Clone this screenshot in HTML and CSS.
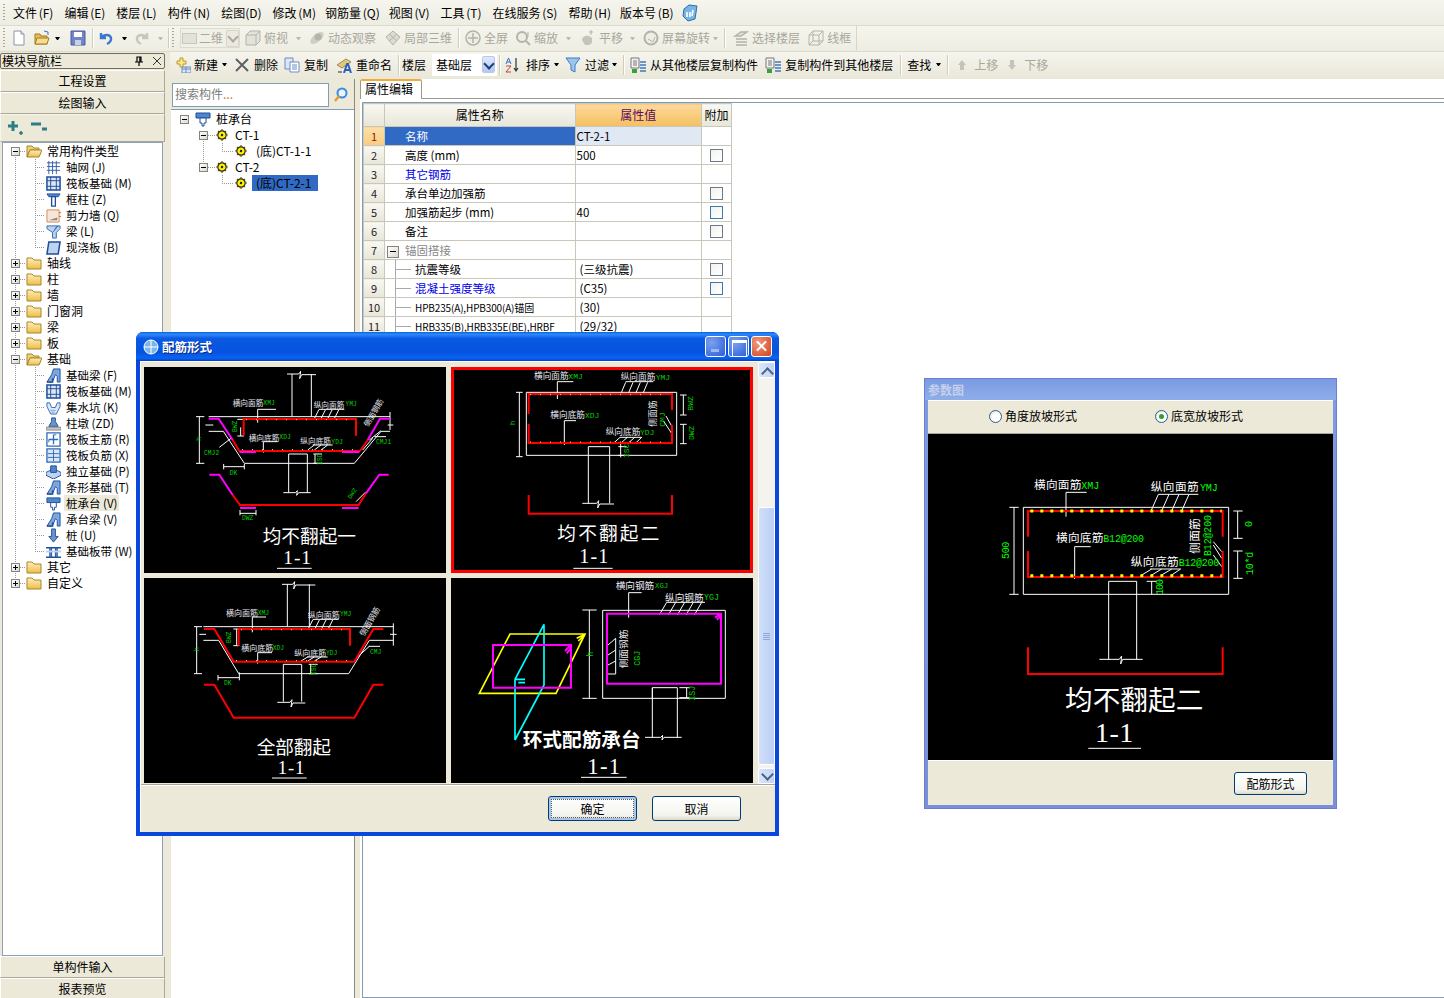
FILE: index.html
```html
<!DOCTYPE html>
<html lang="zh-CN">
<head>
<meta charset="utf-8">
<title>配筋形式</title>
<link rel="stylesheet" href="styles.css">
</head>
<body>
<svg class="sprite" aria-hidden="true">
  <defs>
    <linearGradient id="fold" x1="0" y1="0" x2="0" y2="1"><stop offset="0" stop-color="#fdf0b8"/><stop offset="1" stop-color="#f0bc48"/></linearGradient>
  </defs>
  <symbol id="i-new" viewBox="0 0 16 16"><path d="M3 1h7l3 3v11H3z" fill="#fff" stroke="#8a93a8"/><path d="M10 1v3h3" fill="#dfe6f2" stroke="#8a93a8"/></symbol>
  <symbol id="i-open" viewBox="0 0 16 16"><path d="M1 4h5l1 2h6v8H1z" fill="#e8bb55" stroke="#a37a24"/><path d="M3 8h12l-2 6H1z" fill="#f7dc8e" stroke="#a37a24"/><path d="M10 1l4 1v3" fill="none" stroke="#3f6fc4"/></symbol>
  <symbol id="i-save" viewBox="0 0 16 16"><path d="M1 1h14v14H1z" fill="#7384c8" stroke="#4a5c9e"/><path d="M4 2h8v5H4z" fill="#fff"/><path d="M5 10h6v5H5z" fill="#c8d0e4"/></symbol>
  <symbol id="i-undo" viewBox="0 0 16 16"><path d="M3 3v5h5M3 8c3-4 9-4 10 0 .5 3-2 5-4 6" fill="none" stroke="#3a78d0" stroke-width="2.4"/></symbol>
  <symbol id="i-redo" viewBox="0 0 16 16"><path d="M13 3v5H8M13 8c-3-4-9-4-10 0-.5 3 2 5 4 6" fill="none" stroke="#c6c8c0" stroke-width="2.4"/></symbol>
  <symbol id="i-cube" viewBox="0 0 16 16"><path d="M1 5l4-4h10v10l-4 4H1zM1 5h10v10M11 5l4-4" fill="#e4e3da" stroke="#b4b3a8"/></symbol>
  <symbol id="i-orbit" viewBox="0 0 16 16"><ellipse cx="8" cy="8" rx="8" ry="4" transform="rotate(-40 8 8)" fill="#cfcfc6"/><circle cx="9" cy="7" r="3.5" fill="#b5b5aa"/></symbol>
  <symbol id="i-local" viewBox="0 0 16 16"><path d="M8 1l7 6-7 8-7-8z" fill="#dddcd2" stroke="#b4b3a8"/><path d="M4 4l8 7M12 4l-8 7" stroke="#b4b3a8"/></symbol>
  <symbol id="i-full" viewBox="0 0 16 16"><circle cx="8" cy="8" r="7" fill="#eeeee6" stroke="#b4b3a8" stroke-width="1.5"/><path d="M8 3v10M3 8h10" stroke="#b4b3a8" stroke-width="1.5"/></symbol>
  <symbol id="i-zoom" viewBox="0 0 16 16"><circle cx="7" cy="7" r="5" fill="#eeeee6" stroke="#b4b3a8" stroke-width="2"/><path d="M11 11l4 4" stroke="#b4b3a8" stroke-width="2"/><path d="M13 2v5" stroke="#b4b3a8"/></symbol>
  <symbol id="i-pan" viewBox="0 0 16 16"><path d="M2 10c0-4 5-5 7-4l3 2v5l-3 2H5z" fill="#c4c4ba"/><path d="M11 5V0M9 2h4" stroke="#b4b3a8"/></symbol>
  <symbol id="i-rot" viewBox="0 0 16 16"><circle cx="8" cy="8" r="6.5" fill="#eeeee6" stroke="#b4b3a8" stroke-width="2"/><path d="M5 9l5 3 2-5" fill="none" stroke="#b4b3a8"/></symbol>
  <symbol id="i-floors" viewBox="0 0 16 16"><path d="M2 6l6-4h6L8 6zM3 9h11M3 12h11M3 15h11" fill="#e4e3da" stroke="#b4b3a8" stroke-width="1.4"/></symbol>
  <symbol id="i-wire" viewBox="0 0 16 16"><path d="M1 5l4-4h10v10l-4 4H1zM1 5h10v10M11 5l4-4M5 1v10h10M5 11l-4 4" fill="none" stroke="#b4b3a8"/></symbol>
  <symbol id="i-add" viewBox="0 0 16 16"><path d="M5 1h3v3h3v3H8v3H5V7H2V4h3z" fill="#fbe68c" stroke="#b99a2e"/><path d="M7 10h9v6H7z" fill="#dbe6f6" stroke="#6c8bc0"/><path d="M7 12h9M11 10v6" stroke="#6c8bc0"/></symbol>
  <symbol id="i-del" viewBox="0 0 16 16"><path d="M2 2l12 12M14 2L2 14" stroke="#5e6268" stroke-width="2"/></symbol>
  <symbol id="i-copy" viewBox="0 0 16 16"><path d="M1 1h8v11H1z" fill="#dbe6f6" stroke="#6c8bc0"/><path d="M6 5h9v10H6z" fill="#fff" stroke="#6c8bc0"/><path d="M8 8h5M8 10h5M8 12h5" stroke="#6c8bc0"/></symbol>
  <symbol id="i-ren" viewBox="0 0 16 16"><path d="M1 8l9-6 5 3-9 6z" fill="#e4c87a" stroke="#a08a4a"/><path d="M2 15h4" stroke="#888" stroke-width="2"/><path d="M8 16l3-9h1l3 9M9 13h5" fill="none" stroke="#2f5fc0" stroke-width="2"/></symbol>
  <symbol id="i-sort" viewBox="0 0 16 16"><path d="M1 7l2.500-6L6 7M2 5h3" fill="none" stroke="#3a6fc4"/><path d="M1 9h5l-5 6h5" fill="none" stroke="#c04040"/><path d="M11 1v13M9 11l2 3 2-3" fill="none" stroke="#333" stroke-width="1.2"/></symbol>
  <symbol id="i-filter" viewBox="0 0 16 16"><path d="M1 1h14L10 8v7L6 13V8z" fill="#9cc4ec" stroke="#3f79c2"/></symbol>
  <symbol id="i-floorcopy" viewBox="0 0 16 16"><path d="M1 1h8v10H1z" fill="#f4f4f4" stroke="#777"/><path d="M3 4h4M3 6h4M3 8h4" stroke="#777"/><path d="M10 5h6M10 8h6M10 11h6M10 14h6" stroke="#3f79c2" stroke-width="1.6"/><path d="M2 12h5v4H2z" fill="#3aa03a"/></symbol>
  <symbol id="i-up" viewBox="0 0 16 16"><path d="M8 3l4 5H10v5H6V8H4z" fill="#c4c4ba"/></symbol>
  <symbol id="i-down" viewBox="0 0 16 16"><path d="M8 13l4-5H10V3H6v5H4z" fill="#c4c4ba"/></symbol>
  <symbol id="i-mag" viewBox="0 0 16 16"><circle cx="9" cy="6" r="4.500" fill="#e8f4ff" stroke="#3a8bd8" stroke-width="2"/><path d="M6 9l-4 5" stroke="#e49a2e" stroke-width="2.400"/></symbol>
  <symbol id="i-pin" viewBox="0 0 10 10"><path d="M3 1h4v5H3zM1 6h8M5 6v4" fill="none" stroke="#000" stroke-width="1.200"/><path d="M6 1v5" stroke="#000" stroke-width="1.500"/></symbol>
  <symbol id="i-x" viewBox="0 0 10 10"><path d="M1 1l8 8M9 1L1 9" stroke="#333"/></symbol>
  <symbol id="i-folder" viewBox="0 0 16 16"><path d="M1 3h5l2 2h7v9H1z" fill="url(#fold)" stroke="#a88430"/></symbol>
  <symbol id="i-folder-open" viewBox="0 0 16 16"><path d="M1 3h5l2 2h5v2H4l-3 7z" fill="#f1cf75" stroke="#a88430"/><path d="M4 7h12l-3 7H1z" fill="url(#fold)" stroke="#a88430"/></symbol>
  <symbol id="i-gear" viewBox="0 0 12 12"><circle cx="6" cy="6" r="4.200" fill="#ffee00" stroke="#222" stroke-width="1.200"/><circle cx="6" cy="6" r="1.200" fill="#222"/><path d="M6 0v2M6 10v2M0 6h2M10 6h2M2 2l1 1M9 9l1 1M10 2L9 3M3 9l-1 1" stroke="#5a5a10" stroke-width="1.200"/></symbol>
  <symbol id="t-grid" viewBox="0 0 16 16"><path d="M1 3h14M1 7h14M1 11h14M3 1v14M7 1v14M11 1v14" stroke="#2f5ea8" fill="none"/></symbol>
  <symbol id="t-raft" viewBox="0 0 16 16"><path d="M1 1h14v14H1z" fill="#dbe6f6" stroke="#1f4d9c" stroke-width="1.600"/><path d="M5 1v14M11 1v14M1 5h14M1 11h14" stroke="#1f4d9c"/></symbol>
  <symbol id="t-col" viewBox="0 0 16 16"><path d="M1 2h14l-2 3H3z" fill="#4e86cc" stroke="#1f4d9c"/><path d="M6 5h4v10H6z" fill="#fff" stroke="#1f4d9c" stroke-width="1.400"/></symbol>
  <symbol id="t-wall" viewBox="0 0 16 16"><path d="M1 2h13v13H1z" fill="#f6e6da" stroke="#d68a50"/><path d="M3 13l9-3v3z" fill="#888"/><path d="M14 5h2M14 9h2" stroke="#d06820"/></symbol>
  <symbol id="t-beam" viewBox="0 0 16 16"><path d="M1 2h14v3l-4 4v6H7V9L1 5z" fill="#bcd4f0" stroke="#2f6ab8"/><path d="M9 6l3-4M7 9l6-7" stroke="#2f6ab8"/></symbol>
  <symbol id="t-slab" viewBox="0 0 16 16"><path d="M3 2h12l-2 13H1z" fill="#bcd4f0" stroke="#1f4d9c" stroke-width="1.600"/></symbol>
  <symbol id="t-fbeam" viewBox="0 0 16 16"><path d="M1 15l5-8 2-6h7v14h-3V9l-2-2-3 8z" fill="#7aa8dc" stroke="#1f4d9c"/><path d="M1 15h6v-4" fill="none" stroke="#1f4d9c" stroke-width="1.400"/></symbol>
  <symbol id="t-pit" viewBox="0 0 16 16"><path d="M1 3h3l2 5h4l2-5h3v4l-4 8H5L1 7z" fill="#dbe6f6" stroke="#2f6ab8"/><path d="M5 11h6M6 13h4" stroke="#2f6ab8" stroke-dasharray="1 1"/></symbol>
  <symbol id="t-pier" viewBox="0 0 16 16"><path d="M6 2h4v4l3 5H3l3-5z" fill="#6e93c8" stroke="#1f4d9c"/><path d="M0 12h16v3H0z" fill="#c8c8c0" stroke="#888"/></symbol>
  <symbol id="t-main" viewBox="0 0 16 16"><path d="M1 1h14v14H1z" fill="#fff" stroke="#2f6ab8" stroke-width="1.400"/><path d="M8 3v10M3 8h10" stroke="#2f6ab8" stroke-width="1.400"/><path d="M3 8v3M8 3h3" stroke="#2f6ab8"/></symbol>
  <symbol id="t-neg" viewBox="0 0 16 16"><path d="M1 1h14v14H1z" fill="#dbe6f6" stroke="#2f6ab8" stroke-width="1.400"/><path d="M8 2v12M2 6h12M2 10h12" stroke="#2f6ab8"/></symbol>
  <symbol id="t-iso" viewBox="0 0 16 16"><path d="M0 9l8-4 8 4v3l-8 4-8-4z" fill="#bcd4f0" stroke="#1f4d9c"/><path d="M5 2h6v7H5z" fill="#4e86cc" stroke="#1f4d9c"/></symbol>
  <symbol id="t-cap" viewBox="0 0 16 16"><path d="M1 2h14v5H1z" fill="#4e86cc" stroke="#1f4d9c"/><path d="M5 7h6v5H9v3H7v-3H5z" fill="#fff" stroke="#1f4d9c"/></symbol>
  <symbol id="t-pile" viewBox="0 0 16 16"><path d="M6 1h4v8h3l-5 6-5-6h3z" fill="#6e93c8" stroke="#1f4d9c"/></symbol>
  <symbol id="t-band" viewBox="0 0 16 16"><path d="M0 4h16M0 14h16" stroke="#1f4d9c" stroke-width="1.600"/><path d="M4 4h2v10H4zM10 4h2v10h-2z" fill="#6e93c8" stroke="#1f4d9c"/><path d="M0 8h16" stroke="#bcd4f0" stroke-width="2"/></symbol>
  <symbol id="i-app" viewBox="0 0 16 16"><circle cx="8" cy="8" r="7" fill="#7db5e8" stroke="#fff"/><path d="M8 1v14M1 8h14" stroke="#fff"/></symbol>
  <symbol id="i-mascot" viewBox="0 0 16 18"><path d="M2 5l5-4 8 1-2 13-7 2-5-5z" fill="#77b6e4" stroke="#2d6da8"/><path d="M5 8v5M8 8v5M11 6l-1 6" stroke="#fff" stroke-width="1.600"/></symbol>
</svg>

<div class="app">
  <nav class="menubar">
    <span class="grip"></span>
    <span class="menu-item">文件 (F)</span>
    <span class="menu-item">编辑 (E)</span>
    <span class="menu-item">楼层 (L)</span>
    <span class="menu-item">构件 (N)</span>
    <span class="menu-item">绘图(D)</span>
    <span class="menu-item tight">修改 (M)</span>
    <span class="menu-item tight">钢筋量 (Q)</span>
    <span class="menu-item">视图 (V)</span>
    <span class="menu-item">工具 (T)</span>
    <span class="menu-item">在线服务 (S)</span>
    <span class="menu-item tight">帮助 (H)</span>
    <span class="menu-item">版本号 (B)</span>
    <svg class="mascot"><use href="#i-mascot"/></svg>
  </nav>

  <div class="toolbar main-tools">
    <div class="band">
      <span class="grip tall"></span>
      <svg class="ic ml6"><use href="#i-new"/></svg>
      <svg class="ic ml7"><use href="#i-open"/></svg>
      <span class="arrow ml5"></span>
      <svg class="ic ml10"><use href="#i-save"/></svg>
      <span class="sep ml6"></span>
      <svg class="ic ml5"><use href="#i-undo"/></svg>
      <span class="arrow ml8"></span>
      <svg class="ic ml7"><use href="#i-redo"/></svg>
      <span class="arrow off ml8"></span>
      <span class="sep ml5"></span>
      <span class="grip tall ml3"></span>
      <span class="combo off ml6"><span class="swatch"></span><span>二维</span><span class="combo-btn off"></span></span>
      <span class="tool off ml5"><svg class="ic"><use href="#i-cube"/></svg>俯视</span>
      <span class="arrow off ml8"></span>
      <span class="tool off ml8"><svg class="ic"><use href="#i-orbit"/></svg>动态观察</span>
      <span class="tool off ml9"><svg class="ic"><use href="#i-local"/></svg>局部三维</span>
      <span class="sep ml6"></span>
      <span class="tool off ml6"><svg class="ic"><use href="#i-full"/></svg>全屏</span>
      <span class="tool off ml7"><svg class="ic"><use href="#i-zoom"/></svg>缩放</span>
      <span class="arrow off ml8"></span>
      <span class="tool off ml9"><svg class="ic"><use href="#i-pan"/></svg>平移</span>
      <span class="arrow off ml7"></span>
      <span class="tool off ml8"><svg class="ic"><use href="#i-rot"/></svg>屏幕旋转</span>
      <span class="arrow off ml3"></span>
      <span class="sep ml6"></span>
      <span class="tool off ml8"><svg class="ic"><use href="#i-floors"/></svg>选择楼层</span>
      <span class="tool off ml8"><svg class="ic"><use href="#i-wire"/></svg>线框</span>
      <span class="band-end"></span>
    </div>
  </div>

  <div class="workspace">
    <aside class="nav">
      <header class="nav-title"><span>模块导航栏</span><span class="nav-ctrl"><svg class="mini"><use href="#i-pin"/></svg><svg class="mini"><use href="#i-x"/></svg></span></header>
      <button class="nav-btn first">工程设置</button>
      <button class="nav-btn">绘图输入</button>
      <div class="nav-tools">
        <svg class="op" viewBox="0 0 16 16"><path d="M5 1v10M0 6h10" stroke="#2b7d86" stroke-width="3"/><path d="M13 11v4M11 13h4" stroke="#2b7d86" stroke-width="1.600"/></svg>
        <svg class="op" viewBox="0 0 16 16"><path d="M0 4h10M11 9h5" stroke="#2b7d86" stroke-width="3"/></svg>
      </div>
      <div class="nav-tree">
        <div class="tree-root">
          <div class="t-row"><span class="exp minus"></span><span class="dot-h"></span><svg class="ic"><use href="#i-folder-open"/></svg><span class="lbl">常用构件类型</span></div>
          <div class="t-kids">
            <div class="k-row"><span class="dot-h long"></span><svg class="ic"><use href="#t-grid"/></svg><span class="lbl">轴网 (J)</span></div>
            <div class="k-row"><span class="dot-h long"></span><svg class="ic"><use href="#t-raft"/></svg><span class="lbl">筏板基础 (M)</span></div>
            <div class="k-row"><span class="dot-h long"></span><svg class="ic"><use href="#t-col"/></svg><span class="lbl">框柱 (Z)</span></div>
            <div class="k-row"><span class="dot-h long"></span><svg class="ic"><use href="#t-wall"/></svg><span class="lbl">剪力墙 (Q)</span></div>
            <div class="k-row"><span class="dot-h long"></span><svg class="ic"><use href="#t-beam"/></svg><span class="lbl">梁 (L)</span></div>
            <div class="k-row"><span class="dot-h long"></span><svg class="ic"><use href="#t-slab"/></svg><span class="lbl">现浇板 (B)</span></div>
          </div>
          <div class="t-row"><span class="exp"></span><span class="dot-h"></span><svg class="ic"><use href="#i-folder"/></svg><span class="lbl">轴线</span></div>
          <div class="t-row"><span class="exp"></span><span class="dot-h"></span><svg class="ic"><use href="#i-folder"/></svg><span class="lbl">柱</span></div>
          <div class="t-row"><span class="exp"></span><span class="dot-h"></span><svg class="ic"><use href="#i-folder"/></svg><span class="lbl">墙</span></div>
          <div class="t-row"><span class="exp"></span><span class="dot-h"></span><svg class="ic"><use href="#i-folder"/></svg><span class="lbl">门窗洞</span></div>
          <div class="t-row"><span class="exp"></span><span class="dot-h"></span><svg class="ic"><use href="#i-folder"/></svg><span class="lbl">梁</span></div>
          <div class="t-row"><span class="exp"></span><span class="dot-h"></span><svg class="ic"><use href="#i-folder"/></svg><span class="lbl">板</span></div>
          <div class="t-row"><span class="exp minus"></span><span class="dot-h"></span><svg class="ic"><use href="#i-folder-open"/></svg><span class="lbl">基础</span></div>
          <div class="t-kids">
            <div class="k-row"><span class="dot-h long"></span><svg class="ic"><use href="#t-fbeam"/></svg><span class="lbl">基础梁 (F)</span></div>
            <div class="k-row"><span class="dot-h long"></span><svg class="ic"><use href="#t-raft"/></svg><span class="lbl">筏板基础 (M)</span></div>
            <div class="k-row"><span class="dot-h long"></span><svg class="ic"><use href="#t-pit"/></svg><span class="lbl">集水坑 (K)</span></div>
            <div class="k-row"><span class="dot-h long"></span><svg class="ic"><use href="#t-pier"/></svg><span class="lbl">柱墩 (ZD)</span></div>
            <div class="k-row"><span class="dot-h long"></span><svg class="ic"><use href="#t-main"/></svg><span class="lbl">筏板主筋 (R)</span></div>
            <div class="k-row"><span class="dot-h long"></span><svg class="ic"><use href="#t-neg"/></svg><span class="lbl">筏板负筋 (X)</span></div>
            <div class="k-row"><span class="dot-h long"></span><svg class="ic"><use href="#t-iso"/></svg><span class="lbl">独立基础 (P)</span></div>
            <div class="k-row"><span class="dot-h long"></span><svg class="ic"><use href="#t-fbeam"/></svg><span class="lbl">条形基础 (T)</span></div>
            <div class="k-row"><span class="dot-h long"></span><svg class="ic"><use href="#t-cap"/></svg><span class="lbl hot">桩承台 (V)</span></div>
            <div class="k-row"><span class="dot-h long"></span><svg class="ic"><use href="#t-fbeam"/></svg><span class="lbl">承台梁 (V)</span></div>
            <div class="k-row"><span class="dot-h long"></span><svg class="ic"><use href="#t-pile"/></svg><span class="lbl">桩 (U)</span></div>
            <div class="k-row"><span class="dot-h long"></span><svg class="ic"><use href="#t-band"/></svg><span class="lbl">基础板带 (W)</span></div>
          </div>
          <div class="t-row"><span class="exp"></span><span class="dot-h"></span><svg class="ic"><use href="#i-folder"/></svg><span class="lbl">其它</span></div>
          <div class="t-row last"><span class="exp"></span><span class="dot-h"></span><svg class="ic"><use href="#i-folder"/></svg><span class="lbl">自定义</span></div>
        </div>
      </div>
      <button class="nav-btn">单构件输入</button>
      <button class="nav-btn">报表预览</button>
    </aside>

    <div class="content">
      <div class="toolbar comp-tools">
        <span class="tool g3 ml5"><svg class="ic"><use href="#i-add"/></svg>新建</span>
        <span class="arrow ml4"></span>
        <span class="tool ml7"><svg class="ic"><use href="#i-del"/></svg>删除</span>
        <span class="tool ml6"><svg class="ic"><use href="#i-copy"/></svg>复制</span>
        <span class="tool ml8"><svg class="ic"><use href="#i-ren"/></svg>重命名</span>
        <span class="sep ml6"></span>
        <span class="ml3">楼层</span>
        <span class="combo floor ml6"><span>基础层</span><span class="combo-btn"></span></span>
        <span class="sep ml2"></span>
        <span class="tool g5 ml5"><svg class="ic"><use href="#i-sort"/></svg>排序</span>
        <span class="arrow ml4"></span>
        <span class="tool ml6"><svg class="ic"><use href="#i-filter"/></svg>过滤</span>
        <span class="arrow ml3"></span>
        <span class="sep ml6"></span>
        <span class="tool ml6"><svg class="ic"><use href="#i-floorcopy"/></svg>从其他楼层复制构件</span>
        <span class="tool ml7"><svg class="ic"><use href="#i-floorcopy"/></svg>复制构件到其他楼层</span>
        <span class="sep ml7"></span>
        <span class="ml6">查找</span>
        <span class="arrow ml5"></span>
        <span class="sep ml6"></span>
        <span class="tool off ml6"><svg class="ic"><use href="#i-up"/></svg>上移</span>
        <span class="tool off ml6"><svg class="ic"><use href="#i-down"/></svg>下移</span>
      </div>

      <div class="split">
        <section class="comp-pane">
          <div class="search"><span class="search-box">搜索构件<i>...</i></span><svg class="search-ic"><use href="#i-mag"/></svg></div>
          <div class="comp-tree">
            <div class="c-row r0"><span class="exp minus"></span><svg class="ic"><use href="#t-cap"/></svg><span class="lbl">桩承台</span></div>
            <div class="c-group">
              <div class="c-row r1"><span class="exp minus"></span><span class="dot-h"></span><svg class="gear"><use href="#i-gear"/></svg><span class="lbl w">CT-1</span></div>
              <div class="c-row r2"><span class="dot-h long"></span><svg class="gear"><use href="#i-gear"/></svg><span class="lbl sel-pad">(底)CT-1-1</span></div>
              <div class="c-row r1"><span class="exp minus"></span><span class="dot-h"></span><svg class="gear"><use href="#i-gear"/></svg><span class="lbl w">CT-2</span></div>
              <div class="c-row r2"><span class="dot-h long"></span><svg class="gear"><use href="#i-gear"/></svg><span class="lbl sel-pad selected">(底)CT-2-1</span></div>
            </div>
          </div>
        </section>
        <div class="splitter"></div>
        <section class="props">
          <div class="tabs"><span class="tab">属性编辑</span></div>
          <div class="grid-frame">
            <table class="grid">
              <colgroup><col class="c0"><col class="c1"><col class="c2"><col class="c3"></colgroup>
              <thead><tr><th></th><th>属性名称</th><th class="active">属性值</th><th>附加</th></tr></thead>
              <tbody>
                <tr><th class="active-row">1</th><td class="name on">名称</td><td class="cur">CT-2-1</td><td></td></tr>
                <tr><th>2</th><td class="name">高度 (mm)</td><td>500</td><td class="ck"><span class="box"></span></td></tr>
                <tr><th>3</th><td class="name link">其它钢筋</td><td></td><td></td></tr>
                <tr><th>4</th><td class="name">承台单边加强筋</td><td></td><td class="ck"><span class="box"></span></td></tr>
                <tr><th>5</th><td class="name">加强筋起步 (mm)</td><td>40</td><td class="ck"><span class="box blue"></span></td></tr>
                <tr><th>6</th><td class="name">备注</td><td></td><td class="ck"><span class="box"></span></td></tr>
                <tr><th>7</th><td class="group"><span class="exp minus"></span>锚固搭接</td><td></td><td></td></tr>
                <tr><th>8</th><td class="sub">抗震等级</td><td class="val">(三级抗震)</td><td class="ck"><span class="box"></span></td></tr>
                <tr><th>9</th><td class="sub link">混凝土强度等级</td><td class="val">(C35)</td><td class="ck"><span class="box blue"></span></td></tr>
                <tr><th>10</th><td class="sub tiny">HPB235(A),HPB300(A)锚固</td><td class="val">(30)</td><td></td></tr>
                <tr><th>11</th><td class="sub tiny">HRB335(B),HRB335E(BE),HRBF</td><td class="val">(29/32)</td><td></td></tr>
              </tbody>
            </table>
          </div>
        </section>
      </div>
    </div>
  </div>
</div>

<div class="window bar-dialog">
  <div class="titlebar">
    <svg class="app-ic"><use href="#i-app"/></svg><span class="win-title">配筋形式</span>
    <span class="win-ctrls"><span class="w-btn min"></span><span class="w-btn max"></span><span class="w-btn cls"></span></span>
  </div>
  <div class="win-body">
    <div class="picker">
      <div class="panels">
        <div class="panel tall-row d1">
          <svg class="fill" viewBox="24 111 906 618">
            <path class="w" d="M468 132V260M526 132V260M453 132H488l6-8-3 22 6-12H540M218 260H762M190 260V400M180 260H205M180 400H205M218 304H262L325 400H655L735 304H762M762 246V300M755 285H772M208 285H232M458 372V488M514 372V488M458 372H514M442 488H478l6-6-2 14 6-8H524M263 410H325M263 402V418M325 402V418M365 278V238H420M533 270L548 240M553 270L568 240M573 270L588 240M593 270L608 240M548 238H625M382 368V335H425M515 360L535 345M535 360L555 345M555 360L575 345M530 345H590M532 372H558M532 400H558M537 372V400M250 352L285 325M312 550H360M312 540V556M360 540V556M660 515L690 485M314 292V318M304 268H324M304 318H324M700 330L735 302M715 320H750M680 360L710 325"/>
            <path class="r" d="M323 317V267H660V317M310 363H672M290 330L310 363M672 363L695 330M290 495L312 525H668L690 490"/>
            <path class="m" d="M218 266H248L290 330M695 330L732 266H762M310 366H360M618 366H670M220 434H250L290 495M690 490L730 434H758M312 534H360M618 534H668"/>
            <path class="y" d="M330 269H660M318 359H670"/>
            <text class="lb" x="290" y="228">横向面筋</text><text class="gr" x="382" y="226">XMJ</text>
            <text class="lb" x="533" y="234">纵向面筋</text><text class="gr" x="628" y="229">YMJ</text>
            <text class="lb" x="338" y="332">横向底筋</text><text class="gr" x="430" y="328">XDJ</text>
            <text class="lb" x="493" y="342">纵向底筋</text><text class="gr" x="586" y="342">YDJ</text>
            <text class="gr" x="204" y="375">CMJ2</text><text class="gr" x="720" y="342">CMJ1</text><text class="gr" x="281" y="435">DK</text><text class="gr" x="318" y="569">DWZ</text>
            <text class="gr" transform="rotate(-90 302 306)" x="302" y="306">BWZ</text><text class="gr" transform="rotate(-90 557 405)" x="557" y="405">ISC</text><text class="gr" transform="rotate(-90 196 332)" x="196" y="332">h</text>
            <text class="gr" transform="rotate(-55 644 508)" x="644" y="508">DWZ</text><text class="lb" transform="rotate(-60 697 292)" x="697" y="292">侧面钢筋</text>
            <text class="ttl" x="380" y="640" textLength="280">均不翻起一</text>
            <text class="num" x="442" y="702" textLength="83">1-1</text><path class="w" d="M423 715H527"/>
          </svg>
        </div>
        <div class="panel tall-row selected-panel d2">
          <svg class="fill" viewBox="3 111 906 618">
            <path class="w" d="M229 187H680V376H229ZM208 187V380M198 187H218M198 380H218M700 195V255M690 195H710M690 255H710M700 283V341M690 283H710M690 341H710M415 376V350H479V520M415 376V520M397 520H440l6-8-3 22 6-12H492M322 207V155H370M511 195L527 157M533 195L549 157M555 195L571 157M577 195L593 157M527 155H610M343 345V272H378M490 340L510 322M512 340L532 322M534 340L554 322M556 340L575 322M510 322H575M648 258L666 290M640 272L666 312M512 342V382M505 350H530M505 376H530"/>
            <path class="r" d="M236 252V192H666V240M236 282V339H666V285M236 495V551H666V495"/>
            <path class="y" d="M240 194H660M240 336H660"/>
            <text class="lb" x="252" y="147">横向面筋</text><text class="gr" x="355" y="147">XMJ</text>
            <text class="lb" x="512" y="150">纵向面筋</text><text class="gr" x="617" y="150">YMJ</text>
            <text class="lb" x="301" y="263">横向底筋</text><text class="gr" x="405" y="263">XDJ</text>
            <text class="lb" x="467" y="315">纵向底筋</text><text class="gr" x="570" y="315">YDJ</text>
            <text class="lb" transform="rotate(-90 618 290)" x="618" y="290">侧面筋</text>
            <text class="gr" transform="rotate(-90 644 290)" x="644" y="290">CMJ</text><text class="gr" transform="rotate(-90 730 242)" x="730" y="242">BWZ</text><text class="gr" transform="rotate(-90 732 330)" x="732" y="330">DWZ</text><text class="gr" transform="rotate(-90 538 384)" x="538" y="384">ISC</text><text class="gr" transform="rotate(-90 194 286)" x="194" y="286">h</text>
            <text class="ttl" x="322" y="630" textLength="306">均不翻起二</text>
            <text class="num" x="388" y="700" textLength="87">1-1</text><path class="w" d="M370 715H488"/>
          </svg>
        </div>
        <div class="panel d3">
          <svg class="fill" viewBox="24 9 906 615">
            <path class="w" d="M454 28V155M520 28V155M438 28H470l6-8-3 22 6-12H538M202 155H772M182 155V296M174 155H198M174 296H198M202 196H248L308 296H638L700 196H772M772 145V212M762 178H782M190 178H210M442 380V268H497V380M424 382H462l6-8-3 22 6-12H508M246 308H310M246 300V316M310 292V316M349 172V126H390M515 165L530 135M535 165L550 135M555 165L570 135M575 165L590 135M530 133H608M365 266V233H408M495 258L515 246M515 258L535 246M535 258L555 246M513 246H575M518 268H545M518 296H545M524 268V296M302 162V212M292 162H310M292 212H310M660 250L700 214M698 214H732"/>
            <path class="r" d="M204 162H235L293 260H655L712 162H742M308 212V162H642V212M204 329H235L293 428H655L712 329H742"/>
            <path class="y" d="M315 164H640M300 257H650"/>
            <text class="lb" x="270" y="122">横向面筋</text><text class="gr" x="365" y="120">XMJ</text>
            <text class="lb" x="515" y="128">纵向面筋</text><text class="gr" x="612" y="123">YMJ</text>
            <text class="lb" x="316" y="227">横向底筋</text><text class="gr" x="410" y="225">XDJ</text>
            <text class="lb" x="475" y="242">纵向底筋</text><text class="gr" x="570" y="240">YDJ</text>
            <text class="gr" x="702" y="236">CMJ</text><text class="gr" x="264" y="329">DK</text>
            <text class="gr" transform="rotate(-90 286 204)" x="286" y="204">BWZ</text><text class="gr" transform="rotate(-90 540 300)" x="540" y="300">ISC</text><text class="gr" transform="rotate(-90 188 228)" x="188" y="228">h</text>
            <text class="lb" transform="rotate(-60 685 185)" x="685" y="185">侧面钢筋</text>
            <text class="ttl" x="362" y="537" textLength="223">全部翻起</text>
            <text class="num" x="425" y="596" textLength="80">1-1</text><path class="w" d="M408 609H512"/>
          </svg>
        </div>
        <div class="panel d4">
          <svg class="fill" viewBox="3 9 906 615">
            <path class="w" d="M458 106H826V370H458ZM418 105V370M397 105H440M397 370H440M607 370V338H682V487M607 338V487M585 487H632l6-6-2 14 6-8H695M536 128V53H575M628 120L650 82M655 120L677 82M682 120L704 82M708 120L730 82M733 120L755 82M650 82H765M474 210L497 190V297L474 297M474 240L497 225M474 270L497 258M688 338H718M688 368H718M710 338V368"/>
            <path class="yb" d="M88 355L180 177H405L318 355ZM380 190L405 178M385 198L405 178M390 206L405 178"/>
            <path class="cy" d="M195 495L282 330M195 313L282 148M195 313V495M282 148V332M195 313H225M205 323H225"/>
            <path class="mg" d="M129 210H363V338H129ZM345 228L360 212M350 235L362 220M471 116H813V326H471ZM795 128L810 118M800 134L812 124"/>
            <text class="lb" x="497" y="42">横向钢筋</text><text class="gr high" x="615" y="38">XGJ</text>
            <text class="lb" x="645" y="78">纵向钢筋</text><text class="gr" x="762" y="76">YGJ</text>
            <text class="lb" transform="rotate(-90 532 280)" x="532" y="280">侧面钢筋</text>
            <text class="gr" transform="rotate(-90 570 272)" x="570" y="272">CGJ</text><text class="gr" transform="rotate(-90 735 377)" x="735" y="377">ISJ</text><text class="gr" transform="rotate(-90 428 245)" x="428" y="245">h</text>
            <text class="ttl bold" x="218" y="515" textLength="354">环式配筋承台</text>
            <text class="num" x="412" y="598" textLength="98">1-1</text><path class="w" d="M393 607H530"/>
          </svg>
        </div>
      </div>
      <div class="vscroll">
        <span class="sb-btn up"></span>
        <div class="sb-track"><span class="sb-thumb"></span></div>
        <span class="sb-btn down"></span>
      </div>
    </div>
    <div class="win-foot">
      <button class="xp-btn ok">确定</button>
      <button class="xp-btn">取消</button>
    </div>
  </div>
</div>

<div class="window param">
  <div class="param-title">参数图</div>
  <div class="param-body">
    <div class="radios">
      <label class="radio"><span class="rd"></span>角度放坡形式</label>
      <label class="radio"><span class="rd on"></span>底宽放坡形式</label>
    </div>
    <svg class="param-fig" viewBox="24 177 1215 978">
      <path class="w" d="M310 397H926V658H310ZM282 397V658M268 397H296M268 658H296M566 658V619H650V853M566 658V853M538 853H598l7-10-3 24 6-14H668M438 425V352H500M464 612V515H512M693 408L715 358M725 408L747 358M755 408L777 358M785 408L807 358M715 358H835M662 602L695 582M692 602L725 582M722 602L755 582M752 602L782 582M690 582H782M953 408V490M940 408H968M940 490H968M953 528V610M940 528H968M940 610H968M680 619H710M695 619V658M880 500L905 530M880 510L905 550M880 540L905 575"/>
      <path class="r" d="M324 485V408H908V485M324 528V606H908V528M324 817V897H908V817"/>
      <path class="y2" d="M331 408H905M331 602H905"/>
      <path class="mdots" d="M905 530v.1M905 550v.1M905 575v.1"/>
      <text class="lb2" x="342" y="342" textLength="142">横向面筋</text><text class="gr2" x="484" y="342" textLength="54">XMJ</text>
      <text class="lb2" x="692" y="348" textLength="144">纵向面筋</text><text class="gr2" x="840" y="348" textLength="53">YMJ</text>
      <text class="lb2" x="408" y="500" textLength="142">横向底筋</text><text class="gr2" x="550" y="500" textLength="122">B12@200</text>
      <text class="lb2" x="632" y="572" textLength="144">纵向底筋</text><text class="gr2" x="776" y="572" textLength="122">B12@200</text>
      <text class="lb2" transform="rotate(-90 838 536)" x="838" y="536" textLength="106">侧面筋</text>
      <text class="gr2" transform="rotate(-90 873 543)" x="873" y="543" textLength="123">B12@200</text>
      <text class="gr2" transform="rotate(-90 266 552)" x="266" y="552" textLength="52">500</text>
      <text class="gr2" transform="rotate(-90 995 456)" x="995" y="456">0</text>
      <text class="gr2" transform="rotate(-90 998 600)" x="998" y="600" textLength="70">10*d</text>
      <text class="gr2" transform="rotate(-90 730 660)" x="730" y="660" textLength="48">100</text>
      <text class="ttl2" x="435" y="1005" textLength="415">均不翻起二</text>
      <text class="num2" x="525" y="1100" textLength="115">1-1</text><path class="w" d="M505 1120H663"/>
    </svg>
    <div class="param-foot"><button class="xp-btn small">配筋形式</button></div>
  </div>
</div>
</body>
</html>
```

FILE: styles.css
```css
* { box-sizing: border-box; }
html, body { margin: 0; height: 100%; }
body {
  position: relative;
  width: 1444px;
  height: 998px;
  overflow: hidden;
  background: #fff;
  color: #000;
  font: 12px/16px "Noto Sans CJK SC", "Liberation Sans", sans-serif;
}
.sprite { position: absolute; width: 0; height: 0; }
button { font: inherit; color: inherit; padding: 0; cursor: default; }
.ic { width: 16px; height: 16px; flex: none; display: block; }

.ml2 { margin-left: 2px; } .ml3 { margin-left: 3px; } .ml4 { margin-left: 4px; }
.ml5 { margin-left: 5px; } .ml6 { margin-left: 6px; } .ml7 { margin-left: 7px; }
.ml8 { margin-left: 8px; } .ml9 { margin-left: 9px; } .ml10 { margin-left: 10px; }

.app { display: flex; flex-direction: column; height: 998px; }

.menubar {
  height: 26px;
  display: flex;
  align-items: center;
  padding-left: 3px;
  background: linear-gradient(#f6f5ee, #eeede2);
  border-bottom: 1px solid #dcdacb;
}
.grip { width: 2px; height: 18px; flex: none; background: repeating-linear-gradient(#a9a794 0 1px, transparent 1px 3px); }
.grip.tall { height: 20px; }
.menu-item { margin-left: 8px; margin-right: 3px; white-space: nowrap; word-spacing: -1px; }
.menu-item.tight { margin-right: 1px; }
.mascot { width: 16px; height: 18px; margin-left: 5px; }

.toolbar { display: flex; align-items: center; white-space: nowrap; }
.main-tools {
  height: 26px;
  padding-bottom: 1px;
  background: linear-gradient(#f6f5ee, #eeede2);
  border-bottom: 1px solid #dcdacb;
}
.band { display: flex; align-items: center; height: 100%; padding-left: 3px; }
.band-end { width: 1px; height: 100%; background: #d8d6c6; margin-left: 5px; }
.sep { width: 1px; height: 20px; flex: none; background: #cfcdbc; box-shadow: 1px 0 0 #fff; }
.arrow { height: 0; flex: none; border-style: solid; border-color: #000 transparent transparent; border-width: 3px 2.5px 0; width: 5px; }
.arrow.off { border-top-color: #bcbbb0; }
.tool { display: flex; align-items: center; gap: 3px; flex: none; }
.tool.off { color: #a8a79b; }
.comp-tools .tool { gap: 4px; }
.comp-tools .tool.g3 { gap: 3px; }
.comp-tools .tool.g5 { gap: 5px; }
.combo { display: flex; align-items: center; flex: none; }
.combo.off { width: 60px; height: 20px; color: #a8a79b; background: #f1f0e6; border: 1px solid #dcdbd0; gap: 2px; padding-left: 1px; }
.swatch { width: 15px; height: 11px; background: #e3e2d8; border: 1px solid #c8c7bb; }
.combo-btn {
  margin-left: auto; width: 13px; height: 17px; flex: none;
  background: linear-gradient(#dfe9fb, #b4c9f0); border: 1px solid #b5c8ee; border-radius: 2px;
  display: flex; align-items: center; justify-content: center;
}
.combo-btn::after { content: ""; width: 6px; height: 6px; border: solid #1e3f7e; border-width: 0 2px 2px 0; transform: translateY(-1px) rotate(45deg); }
.combo-btn.off { background: #eceae0; border-color: #d6d5c9; }
.combo-btn.off::after { border-color: #aaa99d; }
.combo.floor { width: 65px; height: 22px; background: #fff; padding: 0 2px 0 4px; }

.workspace { flex: 1; display: flex; min-height: 0; background: #ece9d8; }

.nav { width: 170px; height: 948px; flex: none; align-self: flex-start; padding-right: 5px; display: flex; flex-direction: column; }
.nav-title {
  height: 16px; margin-top: 1px; flex: none;
  display: flex; justify-content: space-between; align-items: center;
  border: 1px solid #716f64; border-radius: 2px;
  padding-left: 1px; line-height: 14px; font-size: 12px; background: #ece9d8;
}
.nav-ctrl { display: flex; align-items: center; gap: 8px; padding-right: 2px; }
.mini { width: 10px; height: 10px; display: block; }
.nav-btn {
  height: 22px; display: block; width: 100%; flex: none;
  background: #ece9d8; border: 0; border-top: 1px solid #fff; border-bottom: 1px solid #aca899;
  border-left: 1px solid #fff; border-right: 1px solid #aca899;
}
.nav-btn.first { margin-top: 1px; }
.nav-tools {
  height: 28px; flex: none; display: flex; align-items: center; gap: 7px; padding-left: 7px;
  border: 1px solid #f6f5ee; border-bottom-color: #aca899; border-right-color: #aca899;
}
.op { width: 16px; height: 16px; }
.nav-tree {
  flex: 1; min-height: 0; margin: 0 2px; background: #fff; border: 1px solid #8aa0be; overflow: hidden;
}
.tree-root {
  background: repeating-linear-gradient(#999 0 1px, transparent 1px 2px) 12px 8px / 1px calc(100% - 16px) no-repeat;
}
.t-row { height: 16px; display: flex; align-items: center; padding-left: 8px; }
.exp {
  width: 9px; height: 9px; flex: none; position: relative; z-index: 1;
  border: 1px solid #848484; background: linear-gradient(135deg, #fff, #dcd9cc);
  display: inline-block;
}
.exp::before { content: ""; position: absolute; left: 1px; top: 3px; width: 5px; height: 1px; background: #000; }
.exp::after { content: ""; position: absolute; left: 3px; top: 1px; width: 1px; height: 5px; background: #000; }
.exp.minus::after { display: none; }
.dot-h {
  width: 6px; height: 1px; flex: none;
  background: repeating-linear-gradient(90deg, #999 0 1px, transparent 1px 2px);
}
.dot-h.long { width: 10px; margin-right: 1px; }
.lbl { margin-left: 5px; white-space: nowrap; }
.t-kids {
  margin-left: 32px;
  background: repeating-linear-gradient(#999 0 1px, transparent 1px 2px) 0 0 / 1px calc(100% - 8px) no-repeat;
}
.k-row { height: 16px; display: flex; align-items: center; font-size: 11.5px; }
.k-row .ic { width: 15px; height: 15px; }
.k-row .lbl { margin-left: 5px; }
.k-row .hot { background: #ece9d8; margin-left: 3px; padding: 0 2px; height: 16px; }

.content { flex: 1; min-width: 0; display: flex; flex-direction: column; }
.comp-tools { height: 27px; flex: none; padding-bottom: 2px; background: linear-gradient(#f6f5ee, #e9e7d8); }
.split { flex: 1; min-height: 0; display: flex; }
.comp-pane { width: 184px; flex: none; margin-left: 1px; display: flex; flex-direction: column; border-right: 1px solid #8a8a80; }
.search { height: 30px; flex: none; display: flex; align-items: center; padding: 1px 0 0 1px; gap: 4px; }
.search-box {
  width: 157px; height: 24px; background: #fff; border: 1px solid #7f9db9; color: #7d7d7d; padding-left: 2px; line-height: 20px; font-size: 12px;
}
.search-box i { font-style: normal; color: #d07a30; }
.search-ic { width: 16px; height: 16px; }
.comp-tree { flex: 1; background: #fff; border-top: 1px solid #7f9db9; }
.c-row { height: 16px; display: flex; align-items: center; white-space: nowrap; }
.r0 { padding-left: 9px; margin-top: 1px; }
.r0 .ic { margin-left: 6px; }
.c-group { background: repeating-linear-gradient(#999 0 1px, transparent 1px 2px) 32px 8px / 1px 32px no-repeat; }
.r1 { padding-left: 28px; }
.r1 .dot-h { width: 8px; }
.r1 .lbl { margin-left: 7px; }
.r2 { padding-left: 51px; background: repeating-linear-gradient(#999 0 1px, transparent 1px 2px) 51px 0 / 1px 8px no-repeat; }
.r2 .dot-h.long { width: 12px; }
.gear { width: 12px; height: 12px; flex: none; }
.r2 .lbl { margin-left: 5px; padding: 0 7px 0 4px; height: 16px; }
.selected { background: #316ac5; color: #000; }

.splitter { width: 7px; flex: none; }
.props { flex: 1; min-width: 0; background: #fff; display: flex; flex-direction: column; margin-left: -2px; }
.tabs { height: 20px; flex: none; display: flex; border-bottom: 1px solid #9c9a8c; background: #fff; }
.tab {
  width: 62px; height: 20px; padding-left: 4px; line-height: 15px; background: #fff;
  border: 1px solid #9c9a8c; border-bottom: 0; border-top: 2px solid #f4a93a; border-radius: 2px 2px 0 0; margin-bottom: -1px;
}
.grid-frame { flex: 1; margin: 3px 0 0 2px; border: 1px solid #7f9db9; border-right: 0; }
.grid { border-collapse: collapse; table-layout: fixed; width: 369px; }
.c0 { width: 21px; } .c1 { width: 190px; } .c2 { width: 126px; } .c3 { width: 30px; }
.grid th { font-weight: 400; background: linear-gradient(#f9f8f1, #e8e6d8); border: 1px solid #c9c7ba; height: 19px; padding: 0; }
.grid thead th { height: 23px; }
.grid thead th.active { background: linear-gradient(#fcd99c, #f4c060); color: #5c0a5c; }
.grid tbody th { font-size: 11px; color: #222; }
.grid tbody th.active-row { background: linear-gradient(#fde0a8, #f9cc80); color: #8a1616; }
.grid td { height: 19px; padding: 0 0 0 1px; border: 1px solid #c9c7ba; overflow: hidden; white-space: nowrap; font-size: 11.5px; line-height: 15px; }
.grid td.name { padding-left: 20px; }
.grid td.on { background: #316ac5; color: #fff; }
.grid td.cur { background: #e0e8f4; }
.grid td.link { color: #0000e6; }
.grid td.group { color: #888; padding-left: 2px; }
.group .exp { margin-right: 6px; width: 12px; height: 12px; vertical-align: -3px; }
.group .exp::before { left: 2px; top: 4px; width: 6px; }
.grid td.sub {
  padding-left: 30px;
  background: linear-gradient(#aaa, #aaa) 10px 0 / 1px 100% no-repeat, linear-gradient(#aaa, #aaa) 10px 50% / 16px 1px no-repeat;
}
.grid td.val { padding-left: 4px; }
.grid td.tiny { font-size: 10px; letter-spacing: -.15px; }
.ck { text-align: center; padding: 0 !important; }
.box { display: inline-block; width: 13px; height: 13px; border: 1px solid #6b7a88; background: linear-gradient(135deg, #f2f2ec, #fff); vertical-align: -2px; }
.box.blue { border-color: #3d78b0; }

.window { position: absolute; }
.bar-dialog {
  left: 136px; top: 332px; width: 643px; height: 504px;
  background: #0a47dc; border-radius: 7px 7px 0 0;
  display: flex; flex-direction: column; padding: 0 4px 4px;
}
.titlebar {
  height: 29px; flex: none; margin: 0 -4px; padding: 0 7px; display: flex; align-items: center;
  background: linear-gradient(#0a5fe8 0, #2e8af8 8%, #0a5ae4 22%, #0553e0 70%, #0a64f0 90%, #0340c8 100%);
  border-radius: 7px 7px 0 0;
}
.app-ic { width: 16px; height: 16px; flex: none; }
.win-title { color: #fff; font-weight: 700; margin-left: 3px; font-size: 12.5px; text-shadow: 1px 1px 0 #0a2a80; }
.win-ctrls { margin-left: auto; display: flex; gap: 2px; }
.w-btn { width: 21px; height: 21px; border: 1px solid #fff; border-radius: 3px; background: radial-gradient(circle at 30% 30%, #7aa2f0, #2a5cd8); position: relative; }
.w-btn.min::after { content: ""; position: absolute; left: 5px; bottom: 4px; width: 8px; height: 3px; background: #9bb8f0; }
.w-btn.max::after { content: ""; position: absolute; left: 3px; top: 3px; width: 13px; height: 13px; border: 1px solid #fff; border-top-width: 3px; }
.w-btn.cls { background: radial-gradient(circle at 30% 30%, #ee9a80, #d4421a); }
.w-btn.cls::before, .w-btn.cls::after { content: ""; position: absolute; left: 3px; top: 8px; width: 13px; height: 2px; background: #fff; }
.w-btn.cls::before { transform: rotate(45deg); }
.w-btn.cls::after { transform: rotate(-45deg); }
.win-body { flex: 1; min-height: 0; background: #ece9d8; border-top: 1px solid #fff; border-left: 1px solid #fff; display: flex; flex-direction: column; }
.picker { height: 423px; flex: none; display: flex; border-bottom: 1px solid #aca899; }
.panels { display: grid; grid-template-columns: 302px 302px; grid-template-rows: 206px 205px; gap: 5px; padding: 5px 0 0 3px; }
.panel { background: #000; position: relative; overflow: hidden; }
.selected-panel { outline: 3px solid #ff0000; outline-offset: -3px; }
.fill { display: block; width: 100%; height: 100%; }
.vscroll { width: 17px; margin-left: 5px; display: flex; flex-direction: column; background: #f4f3ee; }
.sb-btn { height: 16px; flex: none; background: linear-gradient(90deg, #d9e6fb, #c1d3f3); border: 1px solid #fff; border-radius: 2px; position: relative; }
.sb-btn::after { content: ""; position: absolute; left: 4px; width: 7px; height: 7px; border: solid #4d6185; border-width: 2px 0 0 2px; top: 6px; transform: rotate(45deg); }
.sb-btn.down::after { transform: rotate(225deg); top: 1px; }
.sb-track { flex: 1; display: flex; align-items: flex-end; padding-bottom: 3px; }
.sb-thumb { width: 100%; height: 258px; background: linear-gradient(90deg, #d0dff9, #bcd0f5); border: 1px solid #fff; border-radius: 2px; position: relative; }
.sb-thumb::after { content: ""; position: absolute; left: 4px; top: 125px; width: 7px; height: 7px; background: repeating-linear-gradient(#8fa8d8 0 1px, transparent 1px 2px); }
.win-foot { flex: 1; border-top: 1px solid #fff; display: flex; gap: 15px; justify-content: flex-end; align-items: flex-start; padding: 10px 34px 0 0; }
.xp-btn {
  width: 89px; height: 25px; border: 1px solid #003c74; border-radius: 3px;
  background: linear-gradient(#fff, #f4f4ee 80%, #dcd8c8);
  display: block; text-align: center; line-height: 21px;
}
.xp-btn.ok { box-shadow: inset 0 0 0 2px #a8c4ec; outline: 1px dotted #555; outline-offset: -4px; }
.xp-btn.small { width: 73px; height: 23px; line-height: 19px; }

.param {
  left: 924px; top: 378px; width: 413px; height: 431px;
  background: linear-gradient(#7f9be2, #7a8fd8); border: 1px solid #6b7fd2; padding: 0 3px 3px;
  display: flex; flex-direction: column;
}
.param-title { height: 21px; flex: none; color: #c6d0ea; font-weight: 700; line-height: 22px; background: linear-gradient(#7c9ae2, #8daeea); margin: 0 -3px; padding-left: 3px; }
.param-body { flex: 1; min-height: 0; background: #ece9d8; display: flex; flex-direction: column; border-top: 1px solid #fff; }
.radios { height: 33px; flex: none; display: flex; align-items: center; padding: 0 0 2px 61px; gap: 78px; border-bottom: 1px solid #aca899; }
.radio { display: flex; align-items: center; gap: 3px; width: 88px; white-space: nowrap; }
.rd { width: 13px; height: 13px; border-radius: 50%; border: 1px solid #2f5f8c; background: radial-gradient(circle at 60% 60%, #fff 40%, #d8d6c8); flex: none; position: relative; }
.rd.on::after { content: ""; position: absolute; left: 3px; top: 3px; width: 5px; height: 5px; border-radius: 50%; background: #2ea12e; }
.param-fig { display: block; width: 405px; height: 326px; background: #000; flex: none; }
.param-foot { flex: 1; border-top: 1px solid #fff; display: flex; justify-content: flex-end; align-items: flex-start; padding: 11px 26px 0 0; }

svg .w { fill: none; stroke: #fff; stroke-width: 3; }
svg .r { fill: none; stroke: #f00; stroke-width: 6; }
svg .m { fill: none; stroke: #f0f; stroke-width: 6; }
svg .y { fill: none; stroke: #ff0; stroke-width: 3; stroke-dasharray: 3 27; }
svg .y2 { fill: none; stroke: #ff0; stroke-width: 9; stroke-dasharray: 9 21; }
svg .mdots { fill: none; stroke: #f0f; stroke-width: 9; }
svg .yb { fill: none; stroke: #ff0; stroke-width: 5; }
svg .cy { fill: none; stroke: #0ff; stroke-width: 5; }
svg .mg { fill: none; stroke: #f0f; stroke-width: 6; }
svg .lb { fill: #e8e8f0; font-size: 23px; }
svg .gr { fill: #00d000; font-size: 19px; font-family: "Liberation Mono", monospace; }
.d2 svg .lb { font-size: 26px; }
.d2 svg .gr { font-size: 24px; }
.d3 svg .lb { font-size: 24px; }
.d4 svg .lb { font-size: 29px; }
.d4 svg .gr { font-size: 25px; }
.d4 svg .gr.high { font-size: 22px; }
svg .ttl { fill: #fff; font-size: 56px; }
svg .ttl.bold { font-weight: 700; font-size: 59px; }
svg .num { fill: #fff; font-size: 58px; font-family: "Liberation Serif", serif; }
.d2 svg .num { font-size: 60px; }
.d3 svg .num { font-size: 56px; }
.d4 svg .num { font-size: 68px; }
svg .lb2 { fill: #fff; font-size: 35px; }
svg .gr2 { fill: #0f0; font-size: 30px; font-family: "Liberation Mono", monospace; }
svg .ttl2 { fill: #fff; font-size: 83px; }
svg .num2 { fill: #fff; font-size: 84px; font-family: "Liberation Serif", serif; }
```
